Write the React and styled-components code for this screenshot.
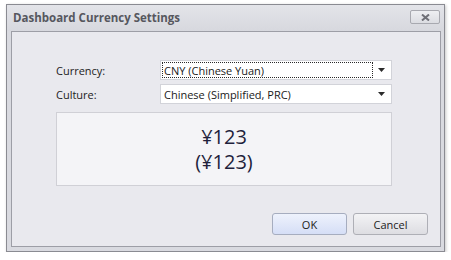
import styled, { createGlobalStyle } from "styled-components";

const GlobalStyle = createGlobalStyle`
  html, body {
    margin: 0;
    padding: 0;
    background: #ffffff;
  }
  body {
    font-family: "Open Sans", "DejaVu Sans", sans-serif;
    font-size: 11px;
    color: #1e1e1e;
  }
`

const Window = styled.div`
  margin: 4px 0 0 6px;
  width: 439px;
  height: 248px;
  box-sizing: border-box;
  border: 1px solid #8a8b92;
  background: #d9dae0;
  box-shadow: 1px 1px 3px rgba(0, 0, 0, 0.22);
  display: flex;
  flex-direction: column;
  padding: 0 3px 4px 4px;
`

const TitleBar = styled.div`
  height: 26px;
  flex: none;
  display: flex;
  align-items: flex-start;
  justify-content: space-between;
  background: linear-gradient(#e3e4e9, #d7d8de);
  margin: 0 -3px 0 -4px;
  padding: 0 3px 0 6px;
`

const Title = styled.div`
  font-weight: 700;
  font-size: 11.5px;
  color: #56575e;
  line-height: 14px;
  margin-top: 6px;
`

const CloseButton = styled.div`
  width: 30px;
  height: 14px;
  box-sizing: border-box;
  margin-top: 5px;
  margin-right: 1px;
  border: 1px solid #a8a9b0;
  border-radius: 2px;
  background: linear-gradient(#eeeff2, #dcdde2);
  display: flex;
  align-items: center;
  justify-content: center;
`

const Panel = styled.div`
  flex: 1;
  border: 1px solid #9d9ea6;
  background: #e9e9ee;
  display: flex;
  flex-direction: column;
  align-items: flex-start;
  padding: 28px 12px 11px 44px;
`

const Form = styled.div`
  display: grid;
  grid-template-columns: 104px 232px;
  grid-auto-rows: 20px;
  row-gap: 4px;
  align-items: center;
`

const Label = styled.div`
  color: #222;
`

const Combo = styled.div`
  height: 20px;
  box-sizing: border-box;
  border: 1px solid #d2d3d9;
  background: #ffffff;
  display: flex;
  align-items: center;
  padding: 1px;
`

const ComboText = styled.div`
  flex: 1;
  height: 100%;
  box-sizing: border-box;
  border: 1px dotted ${(p) => (p.focused ? "#2a2a2a" : "transparent")};
  display: flex;
  align-items: center;
  padding-left: 1px;
  color: #1a1a1a;
  white-space: nowrap;
`

const Arrow = styled.div`
  width: 17px;
  flex: none;
  display: flex;
  align-items: center;
  justify-content: center;
`

const Preview = styled.div`
  margin-top: 8px;
  width: 336px;
  height: 74px;
  box-sizing: border-box;
  border: 1px solid #d0d0d6;
  background: #f4f4f7;
  display: flex;
  flex-direction: column;
  align-items: center;
  justify-content: center;
  font-size: 20px;
  line-height: 25px;
  color: #1f1f3c;
`

const Buttons = styled.div`
  margin-top: auto;
  align-self: stretch;
  display: flex;
  justify-content: flex-end;
  gap: 6px;
`

const Button = styled.div`
  width: 75px;
  height: 22px;
  box-sizing: border-box;
  border: 1px solid ${(p) => (p.primary ? "#a6adbf" : "#aeafb6")};
  border-radius: 3px;
  background: ${(p) =>
    p.primary
      ? "linear-gradient(#eef2fc, #d5def6)"
      : "linear-gradient(#f3f3f5, #dddde2)"};
  display: flex;
  align-items: center;
  justify-content: center;
  color: #222;
`

function DropArrow() {
  return (
    <svg width="7" height="4" viewBox="0 0 7 4">
      <path d="M0 0H7L3.5 4Z" fill="#2b2b2b" />
    </svg>
  );
}

function CloseIcon() {
  return (
    <svg width="9" height="7" viewBox="0 0 9 7">
      <path d="M1 0.5L8 6.5M8 0.5L1 6.5" stroke="#6f7077" strokeWidth="2" />
    </svg>
  );
}

function App() {
  return (
    <>
      <GlobalStyle />
      <Window>
        <TitleBar>
          <Title>Dashboard Currency Settings</Title>
          <CloseButton>
            <CloseIcon />
          </CloseButton>
        </TitleBar>
        <Panel>
          <Form>
            <Label>Currency:</Label>
            <Combo>
              <ComboText focused>CNY (Chinese Yuan)</ComboText>
              <Arrow><DropArrow /></Arrow>
            </Combo>
            <Label>Culture:</Label>
            <Combo>
              <ComboText>Chinese (Simplified, PRC)</ComboText>
              <Arrow><DropArrow /></Arrow>
            </Combo>
          </Form>
          <Preview>
            <div>¥123</div>
            <div>(¥123)</div>
          </Preview>
          <Buttons>
            <Button primary>OK</Button>
            <Button>Cancel</Button>
          </Buttons>
        </Panel>
      </Window>
    </>
  );
}

export default App;
